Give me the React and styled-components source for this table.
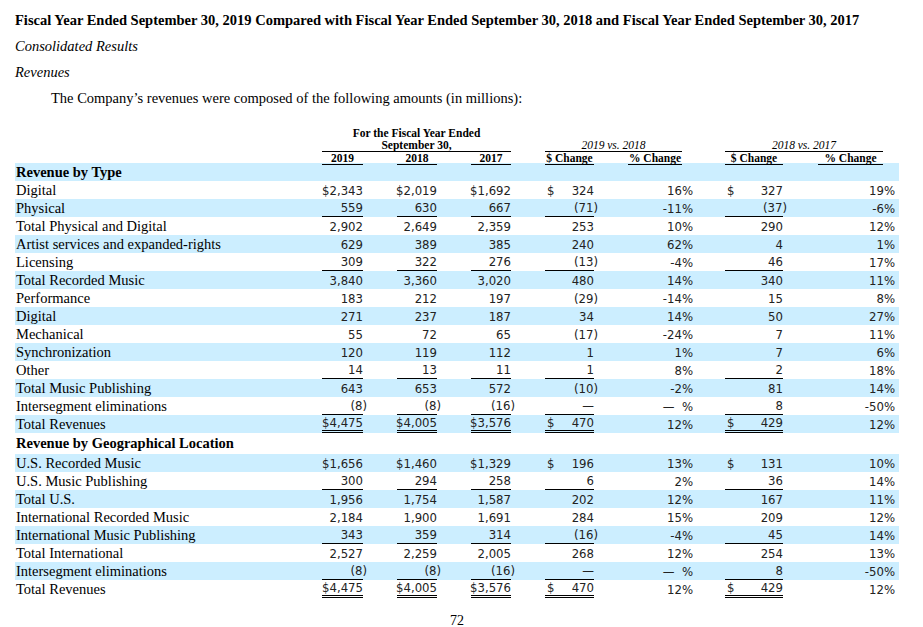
import React from "react";
import styled, { createGlobalStyle } from "styled-components";

const GlobalStyle = createGlobalStyle`
  html, body {
    margin: 0;
    padding: 0;
    background: #fff;
  }
`;

const cols =
  "307px 41px 34px 40px 34px 40px 34px 49px 34px 65px 32px 58px 35px 77px 4px";
const blue = "#cceeff";

const Page = styled.div`
  padding: 7px 0 0 15px;
  font-family: "Liberation Serif", "Times New Roman", serif;
  color: #000;
`;

const Title = styled.div`
  font-size: 14.5px;
  font-weight: bold;
  line-height: 26px;
  white-space: nowrap;
`;

const Subhead = styled.div`
  font-size: 14.5px;
  font-style: italic;
  line-height: 26px;
`;

const Para = styled.div`
  font-size: 14.5px;
  line-height: 26px;
  text-indent: 36px;
`;

const Sheet = styled.div`
  width: 884px;
  margin-top: 16px;
`;

const HeadRow = styled.div`
  display: grid;
  grid-template-columns: ${cols};
  height: ${(p) => p.$h}px;
  font-size: 11.5px;
  line-height: 12px;
  font-weight: bold;
`;

const HeadCell = styled.div`
  grid-column: ${(p) => p.$col};
  text-align: center;
  display: flex;
  flex-direction: column;
  justify-content: flex-end;
  font-style: ${(p) => (p.$italic ? "italic" : "normal")};
  font-weight: ${(p) => (p.$italic ? "normal" : "bold")};
`;

const HeadText = styled.span`
  display: block;
  margin-right: ${(p) => p.$trim || 0}px;
  border-bottom: ${(p) => (p.$rule ? "1px solid #000" : "none")};
  white-space: nowrap;
`;

const Row = styled.div`
  display: grid;
  grid-template-columns: ${cols};
  height: ${(p) => p.$h}px;
  background: ${(p) => (p.$shade ? blue : "#fff")};
`;

const Label = styled.div`
  grid-column: 1;
  padding-left: 1px;
  font-size: 14.5px;
  font-weight: ${(p) => (p.$bold ? "bold" : "normal")};
  display: flex;
  align-items: center;
  white-space: nowrap;
`;

const Num = styled.div`
  grid-column: ${(p) => p.$col};
  font-family: "DejaVu Sans Condensed", "Liberation Sans", Arial, sans-serif;
  font-size: 13px;
  color: #222;
  display: flex;
  align-items: center;
  justify-content: ${(p) => (p.$dollar ? "space-between" : "flex-end")};
  box-sizing: border-box;
  padding-left: ${(p) => (p.$dollar ? "2px" : "0")};
  border-bottom: ${(p) =>
    p.$rule === "double"
      ? "3px double #000"
      : p.$rule === "single"
      ? "1px solid #000"
      : "none"};
  white-space: pre;
`;

const Hang = styled.span`
  margin-right: -4px;
`;

const PageNo = styled.div`
  width: 884px;
  text-align: center;
  font-size: 14px;
  line-height: 16px;
  margin-top: 15px;
`;

const rows = [
  { head: "Revenue by Type" },
  ["Digital", "$2,343", "$2,019", "$1,692", "$ 324", "16%", "$ 327", "19%"],
  ["Physical", "559", "630", "667", "(71)", "-11%", "(37)", "-6%", "single"],
  ["Total Physical and Digital", "2,902", "2,649", "2,359", "253", "10%", "290", "12%"],
  ["Artist services and expanded-rights", "629", "389", "385", "240", "62%", "4", "1%"],
  ["Licensing", "309", "322", "276", "(13)", "-4%", "46", "17%", "single"],
  ["Total Recorded Music", "3,840", "3,360", "3,020", "480", "14%", "340", "11%"],
  ["Performance", "183", "212", "197", "(29)", "-14%", "15", "8%"],
  ["Digital", "271", "237", "187", "34", "14%", "50", "27%"],
  ["Mechanical", "55", "72", "65", "(17)", "-24%", "7", "11%"],
  ["Synchronization", "120", "119", "112", "1", "1%", "7", "6%"],
  ["Other", "14", "13", "11", "1", "8%", "2", "18%", "single"],
  ["Total Music Publishing", "643", "653", "572", "(10)", "-2%", "81", "14%"],
  ["Intersegment eliminations", "(8)", "(8)", "(16)", "—", "—  %", "8", "-50%", "single"],
  ["Total Revenues", "$4,475", "$4,005", "$3,576", "$ 470", "12%", "$ 429", "12%", "double"],
  { head: "Revenue by Geographical Location", h: 21 },
  ["U.S. Recorded Music", "$1,656", "$1,460", "$1,329", "$ 196", "13%", "$ 131", "10%"],
  ["U.S. Music Publishing", "300", "294", "258", "6", "2%", "36", "14%", "single"],
  ["Total U.S.", "1,956", "1,754", "1,587", "202", "12%", "167", "11%"],
  ["International Recorded Music", "2,184", "1,900", "1,691", "284", "15%", "209", "12%"],
  ["International Music Publishing", "343", "359", "314", "(16)", "-4%", "45", "14%", "single"],
  ["Total International", "2,527", "2,259", "2,005", "268", "12%", "254", "13%"],
  ["Intersegment eliminations", "(8)", "(8)", "(16)", "—", "—  %", "8", "-50%", "single"],
  ["Total Revenues", "$4,475", "$4,005", "$3,576", "$ 470", "12%", "$ 429", "12%", "double"],
];

// grid columns for the 7 figures, and whether each one takes the row's rule
const figCols = [2, 4, 6, 8, 10, 12, 14];
const ruled = [true, true, true, true, false, true, false];

const Value = ({ text }) => {
  if (text.endsWith(")")) {
    return (
      <span>
        {text.slice(0, -1)}
        <Hang>)</Hang>
      </span>
    );
  }
  return <span>{text}</span>;
};

const Figure = ({ col, text, rule }) => {
  if (text.startsWith("$ ")) {
    return (
      <Num $col={col} $rule={rule} $dollar>
        <span>$</span>
        <Value text={text.slice(2)} />
      </Num>
    );
  }
  return (
    <Num $col={col} $rule={rule}>
      <Value text={text} />
    </Num>
  );
};

const App = () => {
  return (
    <Page>
      <GlobalStyle />
      <Title>
        Fiscal Year Ended September 30, 2019 Compared with Fiscal Year Ended
        September 30, 2018 and Fiscal Year Ended September 30, 2017
      </Title>
      <Subhead>Consolidated Results</Subhead>
      <Subhead>Revenues</Subhead>
      <Para>
        The Company’s revenues were composed of the following amounts (in
        millions):
      </Para>

      <Sheet>
        <HeadRow $h={12}>
          <HeadCell $col="2 / 7">
            <HeadText>For the Fiscal Year Ended</HeadText>
          </HeadCell>
        </HeadRow>
        <HeadRow $h={13}>
          <HeadCell $col="2 / 7">
            <HeadText $rule>September 30,</HeadText>
          </HeadCell>
          <HeadCell $col="8 / 11" $italic>
            <HeadText $rule $trim={11}>2019 vs. 2018</HeadText>
          </HeadCell>
          <HeadCell $col="12 / 15" $italic>
            <HeadText $rule $trim={12}>2018 vs. 2017</HeadText>
          </HeadCell>
        </HeadRow>
        <HeadRow $h={11}>
          <HeadCell $col="2"><HeadText $rule>2019</HeadText></HeadCell>
          <HeadCell $col="4"><HeadText $rule>2018</HeadText></HeadCell>
          <HeadCell $col="6"><HeadText $rule>2017</HeadText></HeadCell>
          <HeadCell $col="8"><HeadText $rule>$ Change</HeadText></HeadCell>
          <HeadCell $col="10"><HeadText $rule $trim={11}>% Change</HeadText></HeadCell>
          <HeadCell $col="12"><HeadText $rule>$ Change</HeadText></HeadCell>
          <HeadCell $col="14"><HeadText $rule $trim={12}>% Change</HeadText></HeadCell>
        </HeadRow>

        {rows.map((r, i) => {
          if (!Array.isArray(r)) {
            return (
              <Row key={i} $h={r.h || 18} $shade={i % 2 === 0}>
                <Label $bold>{r.head}</Label>
              </Row>
            );
          }
          const [label, ...rest] = r;
          const figs = rest.slice(0, 7);
          const rule = rest[7];
          return (
            <Row key={i} $h={18} $shade={i % 2 === 0}>
              <Label>{label}</Label>
              {figs.map((f, j) => (
                <Figure
                  key={j}
                  col={figCols[j]}
                  text={f}
                  rule={ruled[j] ? rule : undefined}
                />
              ))}
            </Row>
          );
        })}
      </Sheet>
      <PageNo>72</PageNo>
    </Page>
  );
};

export default App;
